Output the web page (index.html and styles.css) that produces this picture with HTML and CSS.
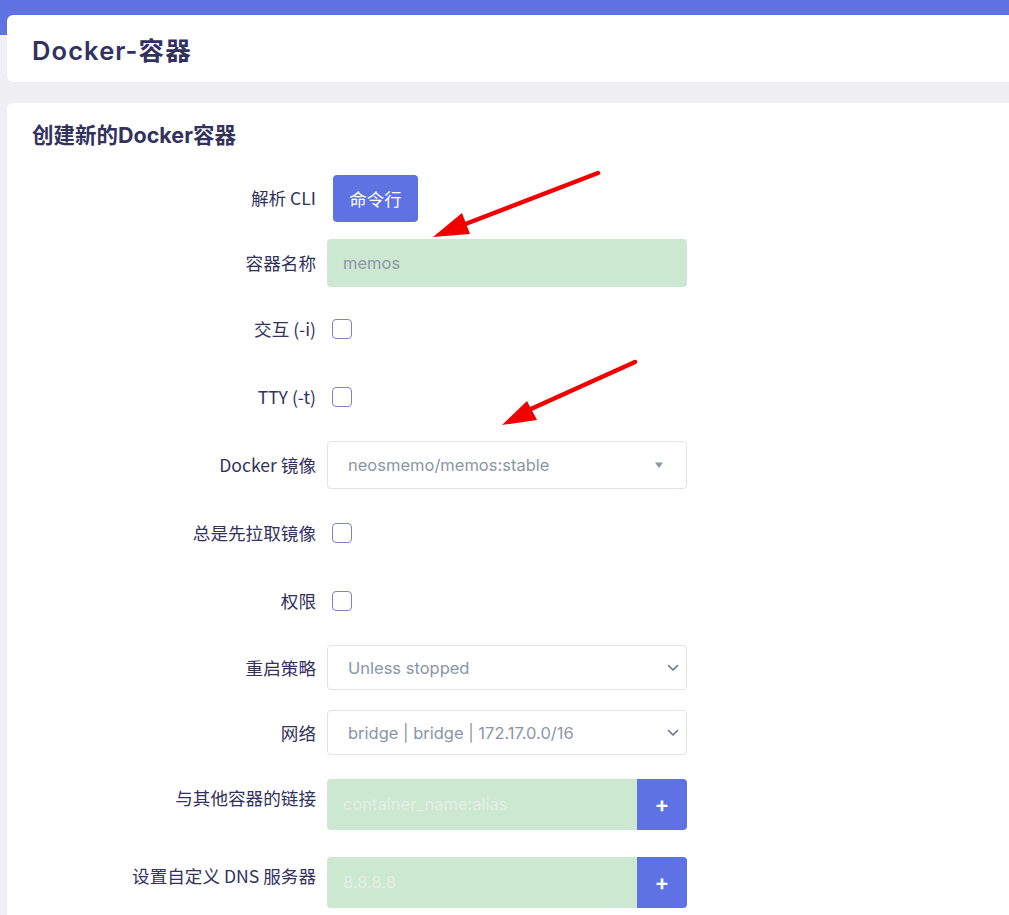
FILE: index.html
```html
<!DOCTYPE html>
<html lang="zh-CN">
<head>
<meta charset="utf-8">
<title>Docker-容器</title>
<link rel="stylesheet" href="styles.css">
</head>
<body>
<div class="hero"></div>
<div class="header-card">
  <h1 class="page-title">Docker-容器</h1>
</div>
<div class="main-card">
  <h2 class="section-title">创建新的Docker容器</h2>
  <div class="form">
    <div class="row">
      <div class="label">解析 CLI</div>
      <div class="field"><button class="btn">命令行</button></div>
    </div>
    <div class="row row-input">
      <div class="label">容器名称</div>
      <div class="field"><div class="input input-filled">memos</div></div>
    </div>
    <div class="row row-check">
      <div class="label">交互 (-i)</div>
      <div class="field"><input class="check" type="checkbox"></div>
    </div>
    <div class="row row-check">
      <div class="label">TTY (-t)</div>
      <div class="field"><input class="check" type="checkbox"></div>
    </div>
    <div class="row row-tall">
      <div class="label">Docker 镜像</div>
      <div class="field">
        <div class="select select-tall">
          <span class="select-text">neosmemo/memos:stable</span>
          <svg class="caret" width="10" height="8" viewBox="0 0 10 8"><path d="M1 1.5 L9 1.5 L5 7 Z" fill="#8a96a6"/></svg>
        </div>
      </div>
    </div>
    <div class="row row-check">
      <div class="label">总是先拉取镜像</div>
      <div class="field"><input class="check" type="checkbox"></div>
    </div>
    <div class="row row-check">
      <div class="label">权限</div>
      <div class="field"><input class="check" type="checkbox"></div>
    </div>
    <div class="row row-select">
      <div class="label">重启策略</div>
      <div class="field">
        <div class="select">
          <span class="select-text">Unless stopped</span>
          <svg class="chevron" width="12" height="8" viewBox="0 0 12 8"><path d="M1.5 1.5 L6 6 L10.5 1.5" fill="none" stroke="#6b7280" stroke-width="1.6" stroke-linecap="round" stroke-linejoin="round"/></svg>
        </div>
      </div>
    </div>
    <div class="row row-select">
      <div class="label">网络</div>
      <div class="field">
        <div class="select">
          <span class="select-text">bridge | bridge | 172.17.0.0/16</span>
          <svg class="chevron" width="12" height="8" viewBox="0 0 12 8"><path d="M1.5 1.5 L6 6 L10.5 1.5" fill="none" stroke="#6b7280" stroke-width="1.6" stroke-linecap="round" stroke-linejoin="round"/></svg>
        </div>
      </div>
    </div>
    <div class="row row-group">
      <div class="label">与其他容器的链接</div>
      <div class="field">
        <div class="group">
          <div class="group-input">container_name:alias</div>
          <button class="group-btn">+</button>
        </div>
      </div>
    </div>
    <div class="row row-group">
      <div class="label">设置自定义 DNS 服务器</div>
      <div class="field">
        <div class="group">
          <div class="group-input">8.8.8.8</div>
          <button class="group-btn">+</button>
        </div>
      </div>
    </div>
  </div>
</div>
<svg class="annotations" width="1009" height="915" viewBox="0 0 1009 915">
  <line x1="598" y1="173" x2="455" y2="228" stroke="#f20000" stroke-width="4.5" stroke-linecap="round"/>
  <polygon points="433,237 462,213 470,234" fill="#f20000"/>
  <line x1="635" y1="362" x2="522" y2="413" stroke="#f20000" stroke-width="4.5" stroke-linecap="round"/>
  <polygon points="502,425 527,401 537,420" fill="#f20000"/>
</svg>
</body>
</html>
```

FILE: styles.css
```css
* { box-sizing: border-box; }
html, body { margin: 0; padding: 0; }
body {
  background: #f0f0f3;
  width: 1009px;
  height: 915px;
  overflow: hidden;
  position: relative;
  font-family: "Inter", "Noto Sans CJK SC", sans-serif;
  color: #32325d;
}
.hero {
  height: 35px;
  background: #5e72e4;
}
.header-card {
  margin: -20px -20px 0 7px;
  height: 67px;
  background: #fff;
  border-radius: 6px;
  display: flex;
  align-items: center;
  padding-left: 25px;
  box-shadow: 0 0 2px rgba(0,0,0,0.04);
}
.page-title {
  margin: 0;
  font-size: 25.5px;
  font-weight: 600;
  letter-spacing: 1.1px;
  color: #32325d;
  font-family: "Inter", "Noto Sans CJK SC", sans-serif;
}
.main-card {
  margin: 21px -20px 0 7px;
  background: #fff;
  border-radius: 6px;
  padding: 18px 25px 40px 25px;
  min-height: 900px;
}
.section-title {
  margin: 0 0 16px 0;
  font-size: 21.5px;
  line-height: 28px;
  font-weight: 700;
  color: #32325d;
  font-family: "Inter", "Noto Sans CJK SC", sans-serif;
}
.form { display: flex; flex-direction: column; }
.row {
  display: flex;
  align-items: center;
  min-height: 66px;
}
.row-input { min-height: 64px; }
.row-check { min-height: 68px; }
.row-tall { min-height: 68px; }
.row-select { min-height: 65px; }
.row-group { min-height: 78px; }
.label {
  width: 284px;
  margin-right: 11px;
  text-align: right;
  font-family: "Noto Sans CJK SC", sans-serif;
  font-size: 17.6px;
  line-height: 24px;
  color: #32325d;
}
.row-group .label { margin-bottom: 13px; }
.field { width: 360px; display: flex; align-items: center; }
.btn {
  margin-left: 6px;
  width: 85px;
  height: 47px;
  background: #5e72e4;
  color: #fff;
  border: none;
  border-radius: 4px;
  font-family: "Noto Sans CJK SC", sans-serif;
  font-size: 17.5px;
}
.input {
  width: 360px;
  height: 48px;
  border-radius: 4px;
  padding: 0 16px;
  display: flex;
  align-items: center;
  font-size: 16.5px;
  color: #8a98a8;
}
.input-filled { background: #cce8d0; }
.check {
  appearance: none;
  -webkit-appearance: none;
  margin: 0 0 0 5px;
  width: 20px;
  height: 20px;
  border: 1.5px solid #7a82cc;
  border-radius: 4px;
  background: #fff;
}
.select {
  width: 360px;
  height: 45px;
  border: 1px solid #dfe3e8;
  border-radius: 4px;
  display: flex;
  align-items: center;
  justify-content: space-between;
  padding: 0 7px 0 20px;
  font-size: 16.5px;
  color: #8a96a6;
  background: #fff;
}
.select-tall { height: 48px; padding-right: 22px; }
.caret { display: block; }
.chevron { display: block; }
.group {
  width: 360px;
  height: 51px;
  display: flex;
}
.group-input {
  flex: 1;
  background: #cce8d0;
  border-radius: 4px 0 0 4px;
  display: flex;
  align-items: center;
  padding: 0 16px;
  font-size: 16.5px;
  color: #e3efe5;
}
.group-btn {
  width: 50px;
  border: none;
  background: #5e72e4;
  color: #fff;
  border-radius: 0 4px 4px 0;
  font-size: 22px;
  font-weight: 600;
  font-family: "Inter", sans-serif;
  padding: 0;
}
.annotations {
  position: absolute;
  top: 0;
  left: 0;
  pointer-events: none;
}
```
